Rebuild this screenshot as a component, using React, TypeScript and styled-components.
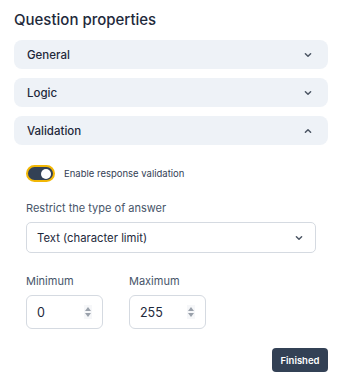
import React from 'react';
import styled, { createGlobalStyle } from 'styled-components';

const GlobalStyle = createGlobalStyle`
  body {
    margin: 0;
    background: #ffffff;
    font-family: Inter, "Noto Sans", sans-serif;
    color: #1e293b;
  }
`;

const Panel = styled.div`
  width: 348px;
  height: 384px;
  box-sizing: border-box;
  padding: 9px 20px 0 14px;
  display: flex;
  flex-direction: column;
`;

const Title = styled.h2`
  margin: 0 0 9px 0;
  font-size: 15px;
  line-height: 22px;
  font-weight: 500;
  color: #1e293b;
`;

const Sections = styled.div`
  display: flex;
  flex-direction: column;
  gap: 9px;
`;

const SectionHeader = styled.div`
  height: 29px;
  border-radius: 8px;
  background: #eef2f7;
  display: flex;
  align-items: center;
  justify-content: space-between;
  padding: 0 15px 0 13px;
  font-size: 11.5px;
  font-weight: 500;
  color: #1e293b;
`;

const Body = styled.div`
  padding: 20px 12px 0 12px;
  display: flex;
  flex-direction: column;
`;

const ToggleRow = styled.label`
  display: flex;
  align-items: center;
  gap: 9px;
  font-size: 9.5px;
  color: #334155;
`;

const Toggle = styled.span<{ $on: boolean }>`
  width: 29px;
  height: 17px;
  box-sizing: border-box;
  border: 2px solid #f2b705;
  border-radius: 9px;
  background: ${(p) => (p.$on ? '#334155' : '#cbd5e1')};
  display: flex;
  align-items: center;
  justify-content: ${(p) => (p.$on ? 'flex-end' : 'flex-start')};
  padding: 0 2px;
`;

const Knob = styled.span`
  width: 10px;
  height: 10px;
  border-radius: 50%;
  background: #ffffff;
`;

const FieldLabel = styled.div`
  font-size: 11px;
  line-height: 16px;
  color: #475569;
  margin-bottom: 6px;
`;

const Select = styled.div`
  height: 31px;
  box-sizing: border-box;
  border: 1px solid #d5dae1;
  border-radius: 5px;
  display: flex;
  align-items: center;
  justify-content: space-between;
  padding: 0 11px 0 10px;
  font-size: 11.3px;
  color: #1e293b;
`;

const Group = styled.div<{ $top: number }>`
  margin-top: ${(p) => p.$top}px;
`;

const Row = styled.div`
  display: flex;
  gap: 26px;
`;

const NumberBox = styled.div`
  width: 77px;
  height: 34px;
  box-sizing: border-box;
  border: 1px solid #d5dae1;
  border-radius: 6px;
  display: flex;
  align-items: center;
  justify-content: space-between;
  padding: 0 10px 0 10px;
  font-size: 12.5px;
  color: #1e293b;
`;

const Spinner = styled.span`
  width: 8px;
  height: 14px;
  background: #f6f7f9;
  display: flex;
  flex-direction: column;
  align-items: center;
  justify-content: center;
  gap: 2px;
`;

const Footer = styled.div`
  display: flex;
  justify-content: flex-end;
  margin-top: 19px;
`;

const Button = styled.button`
  height: 24px;
  width: 56px;
  padding: 0;
  border: none;
  border-radius: 4px;
  background: #334155;
  color: #ffffff;
  font-family: Inter, "Noto Sans", sans-serif;
  font-size: 9.5px;
  font-weight: 600;
`;

const Chevron = ({ up = false }: { up?: boolean }) => (
  <svg width="10" height="10" viewBox="0 0 10 10" fill="none">
    <path
      d={up ? 'M2.4 6.2 L5 3.7 L7.6 6.2' : 'M2.4 3.8 L5 6.3 L7.6 3.8'}
      stroke="#4b5563"
      strokeWidth="1.5"
      strokeLinecap="round"
      strokeLinejoin="round"
    />
  </svg>
);

const Arrows = () => (
  <Spinner>
    <svg width="6" height="4" viewBox="0 0 6 4">
      <path d="M3 0 L6 4 L0 4 Z" fill="#9aa1ab" />
    </svg>
    <svg width="6" height="4" viewBox="0 0 6 4">
      <path d="M0 0 L6 0 L3 4 Z" fill="#9aa1ab" />
    </svg>
  </Spinner>
);

const NumberField = ({ label, value }: { label: string; value: string }) => (
  <div>
    <FieldLabel>{label}</FieldLabel>
    <NumberBox>
      <span>{value}</span>
      <Arrows />
    </NumberBox>
  </div>
);

export default function App() {
  return (
    <>
      <GlobalStyle />
      <Panel>
        <Title>Question properties</Title>
        <Sections>
          <SectionHeader>
            General
            <Chevron />
          </SectionHeader>
          <SectionHeader>
            Logic
            <Chevron />
          </SectionHeader>
          <div>
            <SectionHeader>
              Validation
              <Chevron up />
            </SectionHeader>
            <Body>
              <ToggleRow>
                <Toggle $on>
                  <Knob />
                </Toggle>
                Enable response validation
              </ToggleRow>
              <Group $top={18}>
                <FieldLabel>Restrict the type of answer</FieldLabel>
                <Select>
                  Text (character limit)
                  <Chevron />
                </Select>
              </Group>
              <Group $top={20}>
                <Row>
                  <NumberField label="Minimum" value="0" />
                  <NumberField label="Maximum" value="255" />
                </Row>
              </Group>
            </Body>
          </div>
        </Sections>
        <Footer>
          <Button>Finished</Button>
        </Footer>
      </Panel>
    </>
  );
}
